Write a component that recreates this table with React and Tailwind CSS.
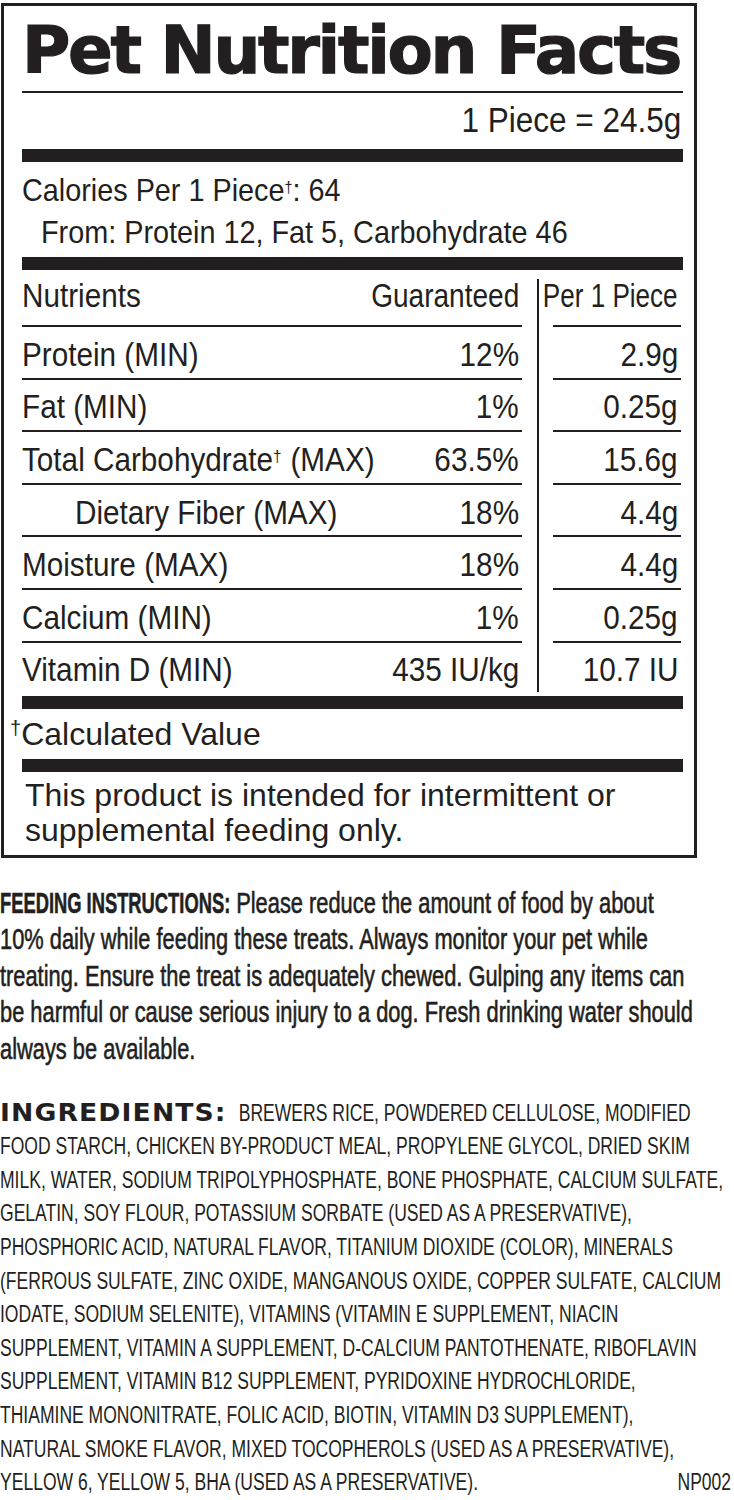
import React from 'react';

const rows = [
  { name: 'Protein (MIN)', g: '12%', p: '2.9g' },
  { name: 'Fat (MIN)', g: '1%', p: '0.25g' },
  {
    name: (
      <>
        Total Carbohydrate<sup className="text-[17px]">†</sup>
        <span className="ml-[10px]">(MAX)</span>
      </>
    ),
    g: '63.5%',
    p: '15.6g',
  },
  { name: 'Dietary Fiber (MAX)', g: '18%', p: '4.4g', indent: true },
  { name: 'Moisture (MAX)', g: '18%', p: '4.4g' },
  { name: 'Calcium (MIN)', g: '1%', p: '0.25g' },
  { name: 'Vitamin D (MIN)', g: '435 IU/kg', p: '10.7 IU' },
];

const feeding = [
  'Please reduce the amount of food by about',
  '10% daily while feeding these treats. Always monitor your pet while',
  'treating. Ensure the treat is adequately chewed. Gulping any items can',
  'be harmful or cause serious injury to a dog. Fresh drinking water should',
  'always be available.',
];

const ingredients = [
  'BREWERS RICE, POWDERED CELLULOSE, MODIFIED',
  'FOOD STARCH, CHICKEN BY-PRODUCT MEAL, PROPYLENE GLYCOL, DRIED SKIM',
  'MILK, WATER, SODIUM TRIPOLYPHOSPHATE, BONE PHOSPHATE, CALCIUM SULFATE,',
  'GELATIN, SOY FLOUR, POTASSIUM SORBATE (USED AS A PRESERVATIVE),',
  'PHOSPHORIC ACID, NATURAL FLAVOR, TITANIUM DIOXIDE (COLOR), MINERALS',
  '(FERROUS SULFATE, ZINC OXIDE, MANGANOUS OXIDE, COPPER SULFATE, CALCIUM',
  'IODATE, SODIUM SELENITE), VITAMINS (VITAMIN E SUPPLEMENT, NIACIN',
  'SUPPLEMENT, VITAMIN A SUPPLEMENT, D-CALCIUM PANTOTHENATE, RIBOFLAVIN',
  'SUPPLEMENT, VITAMIN B12 SUPPLEMENT, PYRIDOXINE HYDROCHLORIDE,',
  'THIAMINE MONONITRATE, FOLIC ACID, BIOTIN, VITAMIN D3 SUPPLEMENT),',
  'NATURAL SMOKE FLAVOR, MIXED TOCOPHEROLS (USED AS A PRESERVATIVE),',
  'YELLOW 6, YELLOW 5, BHA (USED AS A PRESERVATIVE).',
];

/* Condensed label face: regular sans, narrowed horizontally */
function Cond({ children, right = false }) {
  return (
    <span className={right ? 'inline-block origin-right scale-x-[0.9]' : 'inline-block origin-left scale-x-[0.9]'}>
      {children}
    </span>
  );
}

export default function App() {
  return (
    <div className="w-[734px] min-h-[1500px] bg-white text-[#231f20] font-['Liberation_Sans',Arial,sans-serif] overflow-hidden">
      {/* Nutrition facts box */}
      <div className="mt-[3px] ml-[1px] w-[696px] h-[855px] border-[3px] border-[#231f20] pl-[18px] pr-[11px]">
        <h1 className="pt-[12px] font-['DejaVu_Sans',sans-serif] font-bold text-[66px] leading-[66px] tracking-[-2.3px] whitespace-nowrap [-webkit-text-stroke:1.2px_#231f20]">
          Pet Nutrition Facts
        </h1>
        <div className="mt-[7px] h-[2px] bg-[#231f20]" />
        <div className="mt-[9.4px] pr-[2px] flex justify-end text-[35px] leading-[35px] whitespace-nowrap">
          <Cond right>1 Piece = 24.5g</Cond>
        </div>
        <div className="mt-[11.6px] h-[13px] bg-[#231f20]" />

        <div className="mt-[12.4px] text-[32px] leading-[32px] whitespace-nowrap">
          <Cond>
            Calories Per 1 Piece<sup className="text-[16px]">†</sup>: 64
          </Cond>
        </div>
        <div className="mt-[9.8px] pl-[19px] text-[32px] leading-[32px] whitespace-nowrap">
          <Cond>From: Protein 12, Fat 5, Carbohydrate 46</Cond>
        </div>
        <div className="mt-[8.8px] h-[13px] bg-[#231f20]" />

        {/* Table */}
        <div className="flex text-[33px] leading-[33px] whitespace-nowrap">
          <div className="w-[500px] shrink-0">
            <div className="h-[55px] pt-[8.8px] pr-[3px] flex justify-between">
              <Cond>Nutrients</Cond>
              <span className="inline-block origin-right scale-x-[0.85]">Guaranteed</span>
            </div>
            {rows.map((r, i) => (
              <div
                key={i}
                className="h-[52.6px] border-t-2 border-[#231f20] pt-[10.8px] pr-[3px] flex justify-between"
              >
                <span className={r.indent ? 'pl-[53px]' : ''}>
                  <Cond>{r.name}</Cond>
                </span>
                <Cond right>{r.g}</Cond>
              </div>
            ))}
          </div>
          <div className="ml-[15px] mt-[9px] mb-[1px] w-[2px] shrink-0 bg-[#231f20]" />
          <div className="ml-[14px] w-[128px] shrink-0">
            <div className="h-[55px] pt-[8.8px] pr-[3px] flex justify-end">
              <span className="inline-block origin-right scale-x-[0.79]">Per 1 Piece</span>
            </div>
            {rows.map((r, i) => (
              <div
                key={i}
                className="h-[52.6px] border-t-2 border-[#231f20] pt-[10.8px] pr-[3px] flex justify-end"
              >
                <Cond right>{r.p}</Cond>
              </div>
            ))}
          </div>
        </div>

        <div className="mt-[2.8px] h-[13px] bg-[#231f20]" />
        <div className="mt-[9px] text-[32px] leading-[32px] whitespace-nowrap">
          <sup className="text-[20px] -ml-[12px]">†</sup>Calculated Value
        </div>
        <div className="mt-[9px] h-[13px] bg-[#231f20]" />
        <div className="mt-[6px] pl-[3px] text-[32px] leading-[35px] whitespace-nowrap">
          <div>This product is intended for intermittent or</div>
          <div>supplemental feeding only.</div>
        </div>
      </div>

      {/* Feeding instructions (condensed face) */}
      <div className="mt-[26.5px] w-[992px] origin-top-left scale-x-[0.74] text-[29.5px] leading-[36.5px] whitespace-nowrap [-webkit-text-stroke:0.6px_#231f20]">
        {feeding.map((line, i) => (
          <div key={i}>
            {i === 0 && (
              <>
                <span className="inline-block w-[311px]">
                  <span className="inline-block origin-left scale-x-[0.84] font-bold">FEEDING INSTRUCTIONS:</span>
                </span>{' '}
              </>
            )}
            {line}
          </div>
        ))}
      </div>

      {/* Ingredients (condensed face) */}
      <div className="mt-[29.7px] w-[992px] origin-top-left scale-x-[0.74] text-[23.7px] leading-[33.6px] whitespace-nowrap">
        {ingredients.map((line, i) => (
          <div key={i} className={i === ingredients.length - 1 ? 'flex justify-between pr-[4px]' : ''}>
            {i === 0 && (
              <>
                <span className="inline-block w-[316px]">
                  <span className="inline-block origin-left scale-x-[1.5] font-['DejaVu_Sans',sans-serif] font-bold text-[24px] leading-none tracking-[1px]">
                    INGREDIENTS:
                  </span>
                </span>{' '}
              </>
            )}
            <span>{line}</span>
            {i === ingredients.length - 1 && <span>NP002</span>}
          </div>
        ))}
      </div>
    </div>
  );
}
